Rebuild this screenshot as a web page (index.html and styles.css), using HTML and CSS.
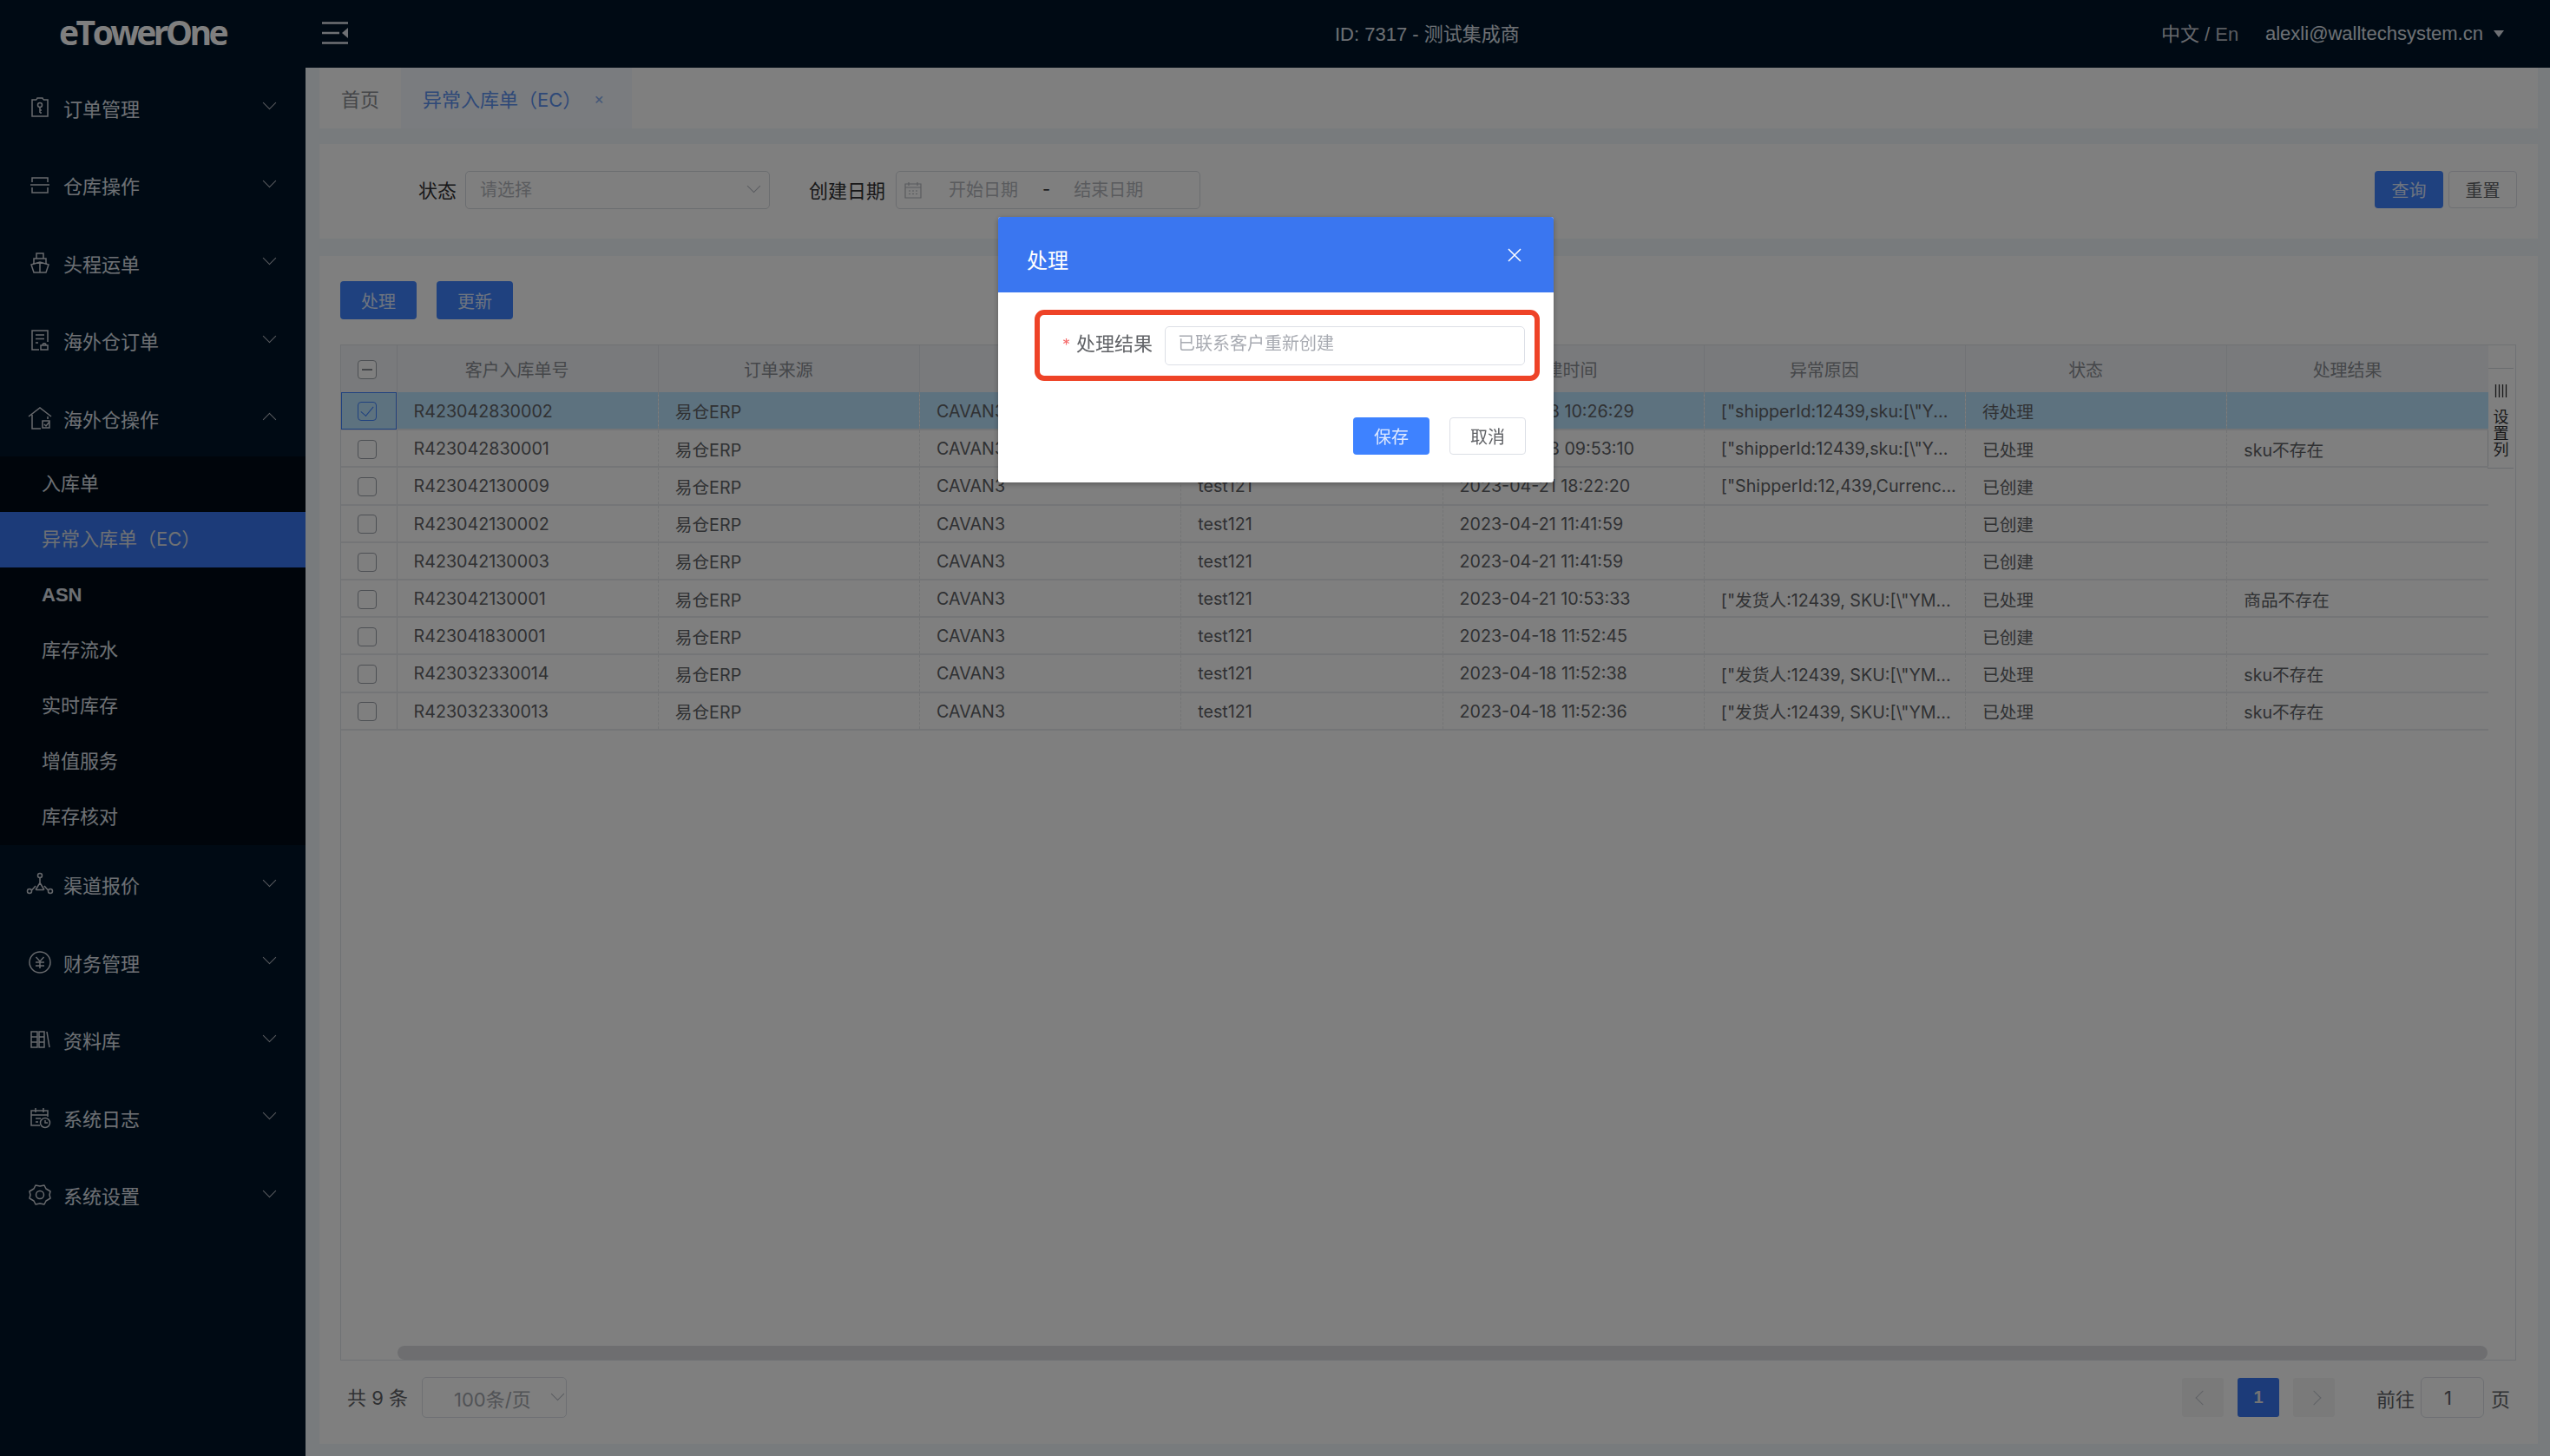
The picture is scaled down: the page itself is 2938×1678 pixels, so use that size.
FILE: index.html
```html
<!DOCTYPE html>
<html lang="en">
<head>
    <meta charset="UTF-8">
    <meta name="viewport" content="width=device-width, initial-scale=1.0">
    <title>eTowerOne</title>
    <link rel="stylesheet" href="styles.css">
</head>
<body>
    <!-- Top bar -->
    <header class="topbar">
        <div class="logo-box"><span class="logo">eTowerOne</span></div>
        <svg class="collapse" width="30" height="26" viewBox="0 0 30 26"><path d="M0 1.5h30M0 13h20M0 24.5h30" stroke="currentColor" stroke-width="2.5"/><path d="M30 7v12l-7-6z" fill="currentColor"/></svg>
        <div class="company">ID: 7317 - 测试集成商</div>
        <div class="lang">中文 / <span class="lang-en">En</span></div>
        <div class="user">alexli@walltechsystem.cn</div>
        <span class="user-arrow"></span>
    </header>

    <div class="layout">
        <!-- Sidebar -->
        <nav class="sidebar">
            <div class="menu-item">
                <svg class="menu-icon" viewBox="0 0 24 24"><path d="M8 3H3v19h18V3h-5M8 3l1-2h6l1 2"/><circle cx="12" cy="9" r="2.5"/><path d="M12 11.5V18M12 15h2M12 18h2"/></svg>
                <span>订单管理</span><i class="chevron"></i>
            </div>
            <div class="menu-item">
                <svg class="menu-icon" viewBox="0 0 24 24"><path d="M3 9V4h18v5M1 12h22M3 15v6h18v-6"/></svg>
                <span>仓库操作</span><i class="chevron"></i>
            </div>
            <div class="menu-item">
                <svg class="menu-icon" viewBox="0 0 24 24"><path d="M8 7V1h8v6M5 13V7h14v6M2 14l10-3 10 3-3 9H5zM12 11v12"/></svg>
                <span>头程运单</span><i class="chevron"></i>
            </div>
            <div class="menu-item">
                <svg class="menu-icon" viewBox="0 0 24 24"><path d="M11 23H3V1h18v13M7 6h10M7 10.5h10M7 15h3"/><path d="M13 18h8v5h-8zM15 18c0-3 4-3 4 0"/></svg>
                <span>海外仓订单</span><i class="chevron"></i>
            </div>
            <div class="menu-item open">
                <svg class="menu-icon" viewBox="0 0 24 24"><path d="M-1 10 12 0l13 10M3 8v16h10M21 10v3M15 15h8v8h-8zM17 19l2 2 4-5"/></svg>
                <span>海外仓操作</span><i class="chevron up"></i>
            </div>
            <ul class="submenu">
                <li>入库单</li>
                <li class="current">异常入库单（EC）</li>
                <li class="strong">ASN</li>
                <li>库存流水</li>
                <li>实时库存</li>
                <li>增值服务</li>
                <li>库存核对</li>
            </ul>
            <div class="menu-item">
                <svg class="menu-icon" viewBox="0 0 24 24"><circle cx="12" cy="2" r="2.5"/><circle cx="0" cy="20" r="2.5"/><circle cx="24" cy="20" r="2.5"/><path d="M12 4.5v6M7 14l-4.500 5M17 14l4.500 5M7.500 18.500h9M12 10.500 7 18.500M12 10.500l5 8"/></svg>
                <span>渠道报价</span><i class="chevron"></i>
            </div>
            <div class="menu-item">
                <svg class="menu-icon" viewBox="0 0 24 24"><circle cx="12" cy="12" r="12"/><path d="m7.500 6 4.500 5 4.500-5M7 12h10M7 16h10M12 11v8"/></svg>
                <span>财务管理</span><i class="chevron"></i>
            </div>
            <div class="menu-item">
                <svg class="menu-icon" viewBox="0 0 24 24"><path d="M2 3h7v18H2zM2 9h7M2 15h7M11 3h6v18h-6zM11 9h6M11 15h6M20 3l3 18"/></svg>
                <span>资料库</span><i class="chevron"></i>
            </div>
            <div class="menu-item">
                <svg class="menu-icon" viewBox="0 0 24 24"><path d="M12 21H2V4h19v7M2 9h19M7 1v5M16 1v5M7 13h6M7 17h3"/><circle cx="18" cy="18" r="5.500"/><path d="M18 15v3h3"/></svg>
                <span>系统日志</span><i class="chevron"></i>
            </div>
            <div class="menu-item">
                <svg class="menu-icon" viewBox="0 0 24 24"><path d="M7 1 12 2l5-1 2 4 5 3-1 4 1 4-5 3-2 4-5-1-5 1-2-4-5-3 1-4-1-4 5-3z" stroke-linejoin="round"/><circle cx="12" cy="12" r="4.500"/></svg>
                <span>系统设置</span><i class="chevron"></i>
            </div>
        </nav>

        <main class="main">
            <!-- Tabs -->
            <div class="tabs">
                <div class="tab">首页</div>
                <div class="tab active">异常入库单（EC）<span class="tab-close">×</span></div>
            </div>

            <!-- Filters -->
            <section class="filter-card">
                <label class="filter-label status-label">状态</label>
                <div class="select-box">
                    <span class="placeholder">请选择</span>
                    <i class="chevron small"></i>
                </div>
                <label class="filter-label date-label">创建日期</label>
                <div class="date-box">
                    <svg class="date-icon" width="20" height="20" viewBox="0 0 20 20"><path d="M1 3h18v16H1zM1 7h18M5 1v4M15 1v4M5 11h2M9 11h2M13 11h2M5 14.5h2M9 14.5h2M13 14.5h2" fill="none" stroke="currentColor" stroke-width="1.2"/></svg>
                    <span class="placeholder date-from">开始日期</span>
                    <span class="date-sep">-</span>
                    <span class="placeholder date-to">结束日期</span>
                </div>
                <button class="btn btn-primary btn-search">查询</button>
                <button class="btn btn-plain">重置</button>
            </section>

            <!-- Table -->
            <section class="table-card">
                <div class="actions">
                    <button class="btn btn-primary btn-action">处理</button>
                    <button class="btn btn-primary btn-action">更新</button>
                </div>
                <div class="table-wrap">
                    <div class="table-area">
                        <table class="data-table">
                            <thead>
                                <tr>
                                    <th class="check-col"><span class="check half"></span></th>
                                    <th><span>客户入库单号</span></th>
                                    <th><span>订单来源</span></th>
                                    <th><span>渠道名称</span></th>
                                    <th><span>客户名称</span></th>
                                    <th><span>创建时间</span></th>
                                    <th><span>异常原因</span></th>
                                    <th><span>状态</span></th>
                                    <th><span>处理结果</span></th>
                                </tr>
                            </thead>
                            <tbody>
                                <tr class="selected">
                                    <td class="check-col"><span class="check checked"></span></td>
                                    <td>R423042830002</td><td>易仓ERP</td><td>CAVAN3</td><td>test121</td><td>2023-04-28 10:26:29</td><td>["shipperId:12439,sku:[\"Y...</td><td>待处理</td><td></td>
                                </tr>
                                <tr>
                                    <td class="check-col"><span class="check"></span></td>
                                    <td>R423042830001</td><td>易仓ERP</td><td>CAVAN3</td><td>test121</td><td>2023-04-28 09:53:10</td><td>["shipperId:12439,sku:[\"Y...</td><td>已处理</td><td>sku不存在</td>
                                </tr>
                                <tr>
                                    <td class="check-col"><span class="check"></span></td>
                                    <td>R423042130009</td><td>易仓ERP</td><td>CAVAN3</td><td>test121</td><td>2023-04-21 18:22:20</td><td>["ShipperId:12,439,Currenc...</td><td>已创建</td><td></td>
                                </tr>
                                <tr>
                                    <td class="check-col"><span class="check"></span></td>
                                    <td>R423042130002</td><td>易仓ERP</td><td>CAVAN3</td><td>test121</td><td>2023-04-21 11:41:59</td><td></td><td>已创建</td><td></td>
                                </tr>
                                <tr>
                                    <td class="check-col"><span class="check"></span></td>
                                    <td>R423042130003</td><td>易仓ERP</td><td>CAVAN3</td><td>test121</td><td>2023-04-21 11:41:59</td><td></td><td>已创建</td><td></td>
                                </tr>
                                <tr>
                                    <td class="check-col"><span class="check"></span></td>
                                    <td>R423042130001</td><td>易仓ERP</td><td>CAVAN3</td><td>test121</td><td>2023-04-21 10:53:33</td><td>["发货人:12439, SKU:[\"YM...</td><td>已处理</td><td>商品不存在</td>
                                </tr>
                                <tr>
                                    <td class="check-col"><span class="check"></span></td>
                                    <td>R423041830001</td><td>易仓ERP</td><td>CAVAN3</td><td>test121</td><td>2023-04-18 11:52:45</td><td></td><td>已创建</td><td></td>
                                </tr>
                                <tr>
                                    <td class="check-col"><span class="check"></span></td>
                                    <td>R423032330014</td><td>易仓ERP</td><td>CAVAN3</td><td>test121</td><td>2023-04-18 11:52:38</td><td>["发货人:12439, SKU:[\"YM...</td><td>已处理</td><td>sku不存在</td>
                                </tr>
                                <tr>
                                    <td class="check-col"><span class="check"></span></td>
                                    <td>R423032330013</td><td>易仓ERP</td><td>CAVAN3</td><td>test121</td><td>2023-04-18 11:52:36</td><td>["发货人:12439, SKU:[\"YM...</td><td>已处理</td><td>sku不存在</td>
                                </tr>
                            </tbody>
                        </table>
                        <div class="scroll-thumb"></div>
                    </div>
                    <div class="column-side">
                        <div class="column-tab">
                            <svg width="16" height="15" viewBox="0 0 16 15"><path d="M1.5 0v15M5.5 0v15M9.5 0v15M13.5 0v15" stroke="currentColor" stroke-width="1.3"/></svg>
                            <span>设置列</span>
                        </div>
                    </div>
                </div>

                <!-- Pager -->
                <div class="pager">
                    <span class="total">共 9 条</span>
                    <div class="size-box">100条/页<i class="chevron small"></i></div>
                    <div class="pager-right">
                        <span class="page-btn"><i class="page-arrow left"></i></span>
                        <span class="page-btn current">1</span>
                        <span class="page-btn"><i class="page-arrow right"></i></span>
                        <span class="goto">前往</span>
                        <span class="goto-box">1</span>
                        <span class="goto-end">页</span>
                    </div>
                </div>
            </section>
        </main>
    </div>

    <!-- Dialog -->
    <div class="mask"></div>
    <div class="dialog">
        <div class="dialog-head">
            <span class="dialog-title">处理</span>
            <svg class="dialog-close" width="16" height="16" viewBox="0 0 16 16"><path d="M1 1l14 14M15 1 1 15" stroke="currentColor" stroke-width="1.5"/></svg>
        </div>
        <div class="dialog-body">
            <div class="mark-box">
                <label class="form-label"><em>*</em>处理结果</label>
                <div class="form-input">已联系客户重新创建</div>
            </div>
            <div class="dialog-foot">
                <button class="btn btn-primary btn-dialog">保存</button>
                <button class="btn btn-plain btn-dialog">取消</button>
            </div>
        </div>
    </div>
</body>
</html>
```

FILE: styles.css
```css
/* Base */
* {
    box-sizing: border-box;
}

body {
    margin: 0;
    width: 2938px;
    height: 1678px;
    overflow: hidden;
    font-family: Inter, "Noto Sans CJK SC", sans-serif;
    font-size: 20px;
    color: #606266;
    background-color: #f0f6fb;
}

button {
    font-family: inherit;
}

/* Top bar */
.topbar {
    display: flex;
    align-items: center;
    height: 78px;
    background-color: #001428;
    color: #dde1e8;
    font-size: 22px;
}

.logo-box {
    width: 371px;
    padding-left: 68px;
    margin-top: -6px;
}

.logo {
    font-family: "Open Sans", sans-serif;
    font-weight: 700;
    font-size: 39px;
    letter-spacing: -3.5px;
    color: #fff;
}

.collapse {
    margin-top: -2px;
}

.company {
    margin-left: 1137px;
    width: 952px;
    margin-top: -5px;
    font-family: "Liberation Sans", "Noto Sans CJK SC", sans-serif;
}

.lang {
    width: 120px;
    margin-top: -5px;
    font-family: "Liberation Sans", "Noto Sans CJK SC", sans-serif;
    color: #ccd0d8;
}

.lang-en {
    color: #b4b8c0;
}

.user {
    font-family: "Liberation Sans", sans-serif;
    font-size: 22px;
}

.user-arrow {
    margin-left: 12px;
    width: 0;
    height: 0;
    border-left: 6px solid transparent;
    border-right: 6px solid transparent;
    border-top: 8px solid #dde1e8;
}

/* Sidebar */
.layout {
    display: flex;
    height: 1600px;
}

.sidebar {
    width: 352px;
    flex: none;
    background-color: #001428;
    color: #dde1e8;
    font-size: 22px;
}

.menu-item {
    display: flex;
    align-items: center;
    height: 89.5px;
    padding: 2px 34px 0 34px;
}

.menu-icon {
    width: 24px;
    height: 24px;
    margin-right: 15px;
    fill: none;
    stroke: #cfd3da;
    stroke-width: 1.5;
    overflow: visible;
}

.menu-item span {
    flex: 1;
}

.chevron {
    width: 11px;
    height: 11px;
    margin-top: -10px;
    margin-right: 2px;
    border-right: 1.5px solid #b4b8c0;
    border-bottom: 1.5px solid #b4b8c0;
    transform: rotate(45deg);
}

.chevron.up {
    margin-top: 4px;
    transform: rotate(225deg);
}

.submenu {
    margin: 0;
    padding: 0;
    list-style: none;
    background-color: #000a16;
}

.submenu li {
    height: 64px;
    padding-left: 48px;
    line-height: 63px;
}

.submenu .current {
    background-color: #3876f2;
}

.submenu .strong {
    font-family: "Liberation Sans", sans-serif;
    font-weight: 700;
}

/* Main */
.main {
    flex: 1;
    padding: 0 14px 14px 16px;
    display: flex;
    flex-direction: column;
}

.tabs {
    display: flex;
    height: 70px;
    background-color: #fff;
    font-size: 22px;
}

.tab {
    display: flex;
    align-items: center;
    padding: 0 25px;
    color: #8a8d93;
    background-color: #fff;
}

.tab.active {
    width: 266px;
    background-color: #f4f8ff;
    color: #5c92f0;
}

.tab-close {
    margin-left: 14px;
    font-size: 18px;
    color: #8ab0f0;
}

.filter-card {
    display: flex;
    align-items: center;
    height: 109px;
    margin-top: 18px;
    padding-bottom: 1px;
    background-color: #fff;
}

.filter-label {
    margin-top: -4px;
    font-size: 22px;
    color: #303133;
}

.status-label {
    margin-left: 114px;
}

.select-box,
.date-box {
    display: flex;
    align-items: center;
    width: 351px;
    height: 44px;
    margin-top: -2px;
    border: 1.5px solid #d6dae0;
    border-radius: 5px;
    background-color: #fff;
}

.select-box {
    justify-content: space-between;
    margin-left: 10px;
    padding: 0 12px 0 16px;
}

.select-box .chevron {
    margin-right: 0;
}

.placeholder {
    margin-top: -3px;
    color: #b4b7bd;
}

.date-label {
    margin-left: 45px;
}

.date-box {
    margin-left: 12px;
    color: #b4b7bd;
}

.date-icon {
    margin-left: 9px;
    flex: none;
}

.date-from {
    margin-left: 31px;
}

.date-sep {
    margin-left: 28px;
    margin-top: -3px;
    color: #303133;
}

.date-to {
    margin-left: 27px;
}

.btn {
    border-radius: 4px;
    font-size: 20px;
    cursor: pointer;
}

.btn-primary {
    border: none;
    background-color: #3e82ff;
    color: #dde8ff;
}

.btn-plain {
    border: 1.5px solid #dcdfe6;
    background-color: #fff;
    color: #606266;
}

.filter-card .btn {
    width: 79px;
    height: 43px;
    margin-top: -4px;
}

.btn-search {
    margin-left: auto;
}

.filter-card .btn-plain {
    margin-left: 6px;
    margin-right: 24px;
}

.table-card {
    flex: 1;
    margin-top: 20px;
    padding: 29px 25px 0 24px;
    background-color: #fff;
}

.actions {
    display: flex;
    gap: 23px;
    margin-bottom: 29px;
}

.btn-action {
    width: 88px;
    height: 44px;
}

.table-wrap {
    display: flex;
    height: 1171px;
}

.table-area {
    position: relative;
    width: 2474px;
    flex: none;
    border: 1.5px solid #dfe3e8;
    border-right: none;
}

.data-table {
    width: 2474px;
    table-layout: fixed;
    border-collapse: collapse;
    color: #606266;
}

.data-table th {
    height: 54px;
    padding: 0 24px 0 0;
    font-weight: 400;
    text-align: center;
    background-color: #f3f5f8;
    color: #8b8e94;
    border-left: 1.5px solid #e2e6ec;
    background-clip: padding-box;
}

.data-table td {
    height: 43.2px;
    padding: 1px 0 0 19px;
    font-size: 19.7px;
    border-left: 1.5px dashed #e6e8eb;
    border-bottom: 2px solid #e8ebef;
    white-space: nowrap;
    overflow: hidden;
}

.data-table .check-col {
    width: 64px;
    padding: 0 3px 0 0;
    border-left: none;
    text-align: center;
}

.data-table th:nth-child(2),
.data-table td:nth-child(2) {
    border-left: 1.5px solid #dfe3e8;
}

.selected td {
    background-color: #bbe4ff;
}

.selected .check-col {
    outline: 1.5px solid #3e82ff;
    outline-offset: -1.5px;
}

.check {
    display: inline-block;
    position: relative;
    vertical-align: middle;
    width: 22px;
    height: 22px;
    border: 1.5px solid #9aa0a8;
    border-radius: 4px;
    background-color: #fff;
}

.selected .check {
    background-color: #bbe4ff;
}

.check.half::after {
    content: "";
    position: absolute;
    left: 4px;
    right: 4px;
    top: 9px;
    height: 1.5px;
    background-color: #8b8e94;
}

.check.checked {
    border-color: #3e82ff;
}

.check.checked::after {
    content: "";
    position: absolute;
    left: 6px;
    top: 1px;
    width: 7px;
    height: 13px;
    border-right: 1.5px solid #3e82ff;
    border-bottom: 1.5px solid #3e82ff;
    transform: rotate(40deg);
}

.scroll-thumb {
    position: absolute;
    left: 65px;
    right: 0;
    bottom: 0;
    height: 16px;
    border-radius: 8px;
    background-color: #dcdde0;
}

.column-side {
    flex: 1;
    padding-top: 26px;
    border: 1.5px solid #dfe3e8;
    border-left: none;
}

.column-tab {
    display: flex;
    flex-direction: column;
    align-items: center;
    gap: 13px;
    height: 116px;
    padding-top: 18px;
    margin-right: 2px;
    border-top: 1.5px solid #d5d9df;
    border-bottom: 1.5px solid #d5d9df;
    border-left: 1.5px solid #d5d9df;
    color: #303133;
}

.column-tab span {
    width: 18px;
    font-size: 18px;
    line-height: 19px;
    text-align: center;
}

/* Pager */
.pager {
    display: flex;
    align-items: center;
    height: 47px;
    margin-top: 19px;
    font-size: 22px;
    color: #606266;
}

.total {
    margin-left: 8px;
    margin-top: -3px;
    width: 86px;
}

.size-box {
    display: flex;
    align-items: center;
    width: 167px;
    height: 47px;
    padding-left: 36px;
    border: 1.5px solid #dcdfe6;
    border-radius: 5px;
    color: #a3a6ad;
}

.size-box .chevron {
    margin-left: 25px;
    margin-top: -8px;
}

.pager-right {
    display: flex;
    align-items: center;
    margin-left: auto;
    margin-right: 7px;
}

.page-btn {
    display: flex;
    align-items: center;
    justify-content: center;
    width: 48px;
    height: 45px;
    margin-right: 16px;
    border-radius: 3px;
    background-color: #f4f4f5;
    font-family: "Liberation Sans", sans-serif;
    font-weight: 700;
    font-size: 20px;
}

.page-btn.current {
    background-color: #3876f2;
    color: #e8e8e8;
}

.page-arrow {
    width: 12px;
    height: 12px;
    border-left: 1.5px solid #c0c4cc;
    border-bottom: 1.5px solid #c0c4cc;
    transform: rotate(45deg);
}

.page-arrow.right {
    transform: rotate(225deg);
}

.goto {
    margin-left: 32px;
}

.goto-box {
    display: flex;
    align-items: center;
    justify-content: center;
    width: 73px;
    height: 47px;
    margin-left: 7px;
    padding-right: 10px;
    border: 1.5px solid #dcdfe6;
    border-radius: 6px;
}

.goto-end {
    margin-left: 8px;
}

/* Dialog */
.mask {
    position: fixed;
    inset: 0;
    background-color: rgba(0, 0, 0, 0.5);
}

.dialog {
    position: fixed;
    left: 1150px;
    top: 250px;
    width: 640px;
    height: 306px;
    border-radius: 3px;
    background-color: #fff;
    box-shadow: 0 2px 6px rgba(0, 0, 0, 0.3);
}

.dialog-head {
    display: flex;
    align-items: center;
    justify-content: space-between;
    height: 87px;
    padding: 0 37px 0 33px;
    border-radius: 3px 3px 0 0;
    background-color: #3a76f0;
    color: #fff;
}

.dialog-title {
    font-size: 24px;
    margin-top: 10px;
}

.dialog-close {
    margin-top: 1px;
}

.dialog-body {
    padding: 20px 16px 0 42px;
}

.mark-box {
    display: flex;
    align-items: center;
    width: 582px;
    height: 82px;
    border: 6px solid #ee4327;
    border-radius: 11px;
}

.form-label {
    width: 144px;
    margin-top: -9px;
    padding-right: 14px;
    text-align: right;
    font-size: 22px;
    white-space: nowrap;
    color: #606266;
}

.form-label em {
    margin-right: 7px;
    font-style: normal;
    color: #f56c6c;
    font-size: 18px;
}

.form-input {
    width: 415px;
    height: 45px;
    padding-left: 14px;
    border: 1.5px solid #dcdfe6;
    border-radius: 5px;
    line-height: 39px;
    color: #a8abb2;
}

.dialog-foot {
    display: flex;
    justify-content: flex-end;
    gap: 23px;
    width: 566px;
    margin-top: 42px;
}

.btn-dialog {
    width: 88px;
    height: 43px;
}
```
